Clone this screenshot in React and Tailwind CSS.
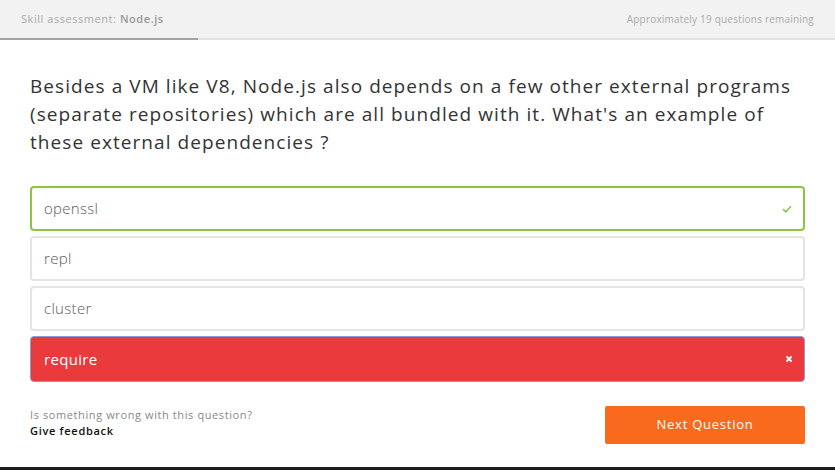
import React from "react";

const font = { fontFamily: "'Open Sans', Lato, sans-serif" };

function Option({ label, state }) {
  if (state === "correct") {
    return (
      <div className="h-[45px] rounded-[4px] border-2 border-[#8cc63f] bg-white flex items-center justify-between pl-[12px] pr-[10px]">
        <span className="text-[15px] font-light text-[#5a5a5a] tracking-[0.3px]">{label}</span>
        <svg width="10" height="8" viewBox="0 0 10 8" className="mr-[1px]">
          <path d="M1 4.2 L3.8 6.8 L9 1.2" fill="none" stroke="#8cc63f" strokeWidth="1.6" />
        </svg>
      </div>
    );
  }
  if (state === "wrong") {
    return (
      <div className="h-[46px] rounded-[4px] border border-[#8f9ad8] bg-[#ea3a3b] flex items-center justify-between pl-[13px] pr-[10px]">
        <span className="text-[15px] font-normal text-white tracking-[0.3px]">{label}</span>
        <svg width="8" height="8" viewBox="0 0 8 8" className="mr-[1px]">
          <path d="M1.5 1.5 L6.5 6.5 M6.5 1.5 L1.5 6.5" fill="none" stroke="#fff" strokeWidth="2" />
        </svg>
      </div>
    );
  }
  return (
    <div className="h-[45px] rounded-[4px] border-2 border-[#e4e4e4] bg-white flex items-center pl-[12px]">
      <span className="text-[15px] font-light text-[#5a5a5a] tracking-[0.3px]">{label}</span>
    </div>
  );
}

export default function App() {
  return (
    <div className="w-[835px] h-[470px] bg-white flex flex-col relative overflow-hidden" style={font}>
      <div className="h-[40px] bg-[#f2f2f2] flex flex-col">
        <div className="flex-1 flex items-center justify-between px-[21px]">
          <span className="text-[11px] text-[#aaa] tracking-[0.55px]">
            Skill assessment: <span className="font-semibold text-[#999]">Node.js</span>
          </span>
          <span className="text-[10px] text-[#aaa] tracking-[0.2px]">Approximately 19 questions remaining</span>
        </div>
        <div className="h-[2px] bg-[#e3e3e3] flex">
          <div className="w-[198px] bg-[#a3a3a3]"></div>
        </div>
      </div>
      <div className="px-[30px] flex flex-col flex-1">
        <p className="mt-[32px] text-[19px] leading-[28px] text-[#333] tracking-[1.07px] whitespace-nowrap">
          Besides a VM like V8, Node.js also depends on a few other external programs
          <br />
          (separate repositories) which are all bundled with it. What's an example of
          <br />
          these external dependencies ?
        </p>
        <div className="mt-[30px] flex flex-col gap-[5px]">
          <Option label="openssl" state="correct" />
          <Option label="repl" />
          <Option label="cluster" />
          <Option label="require" state="wrong" />
        </div>
        <div className="mt-[24px] flex items-center justify-between">
          <div className="flex flex-col leading-[16px] text-[11px] pb-[4px]">
            <span className="text-[#888] tracking-[0.6px]">Is something wrong with this question?</span>
            <span className="font-semibold text-[#111] tracking-[0.7px]">Give feedback</span>
          </div>
          <button className="w-[200px] h-[38px] rounded-[2px] bg-[#f96a1c] text-white text-[13px] tracking-[0.75px]">Next Question</button>
        </div>
      </div>
      <div className="h-[3px] bg-[#1e1e1e]"></div>
    </div>
  );
}
